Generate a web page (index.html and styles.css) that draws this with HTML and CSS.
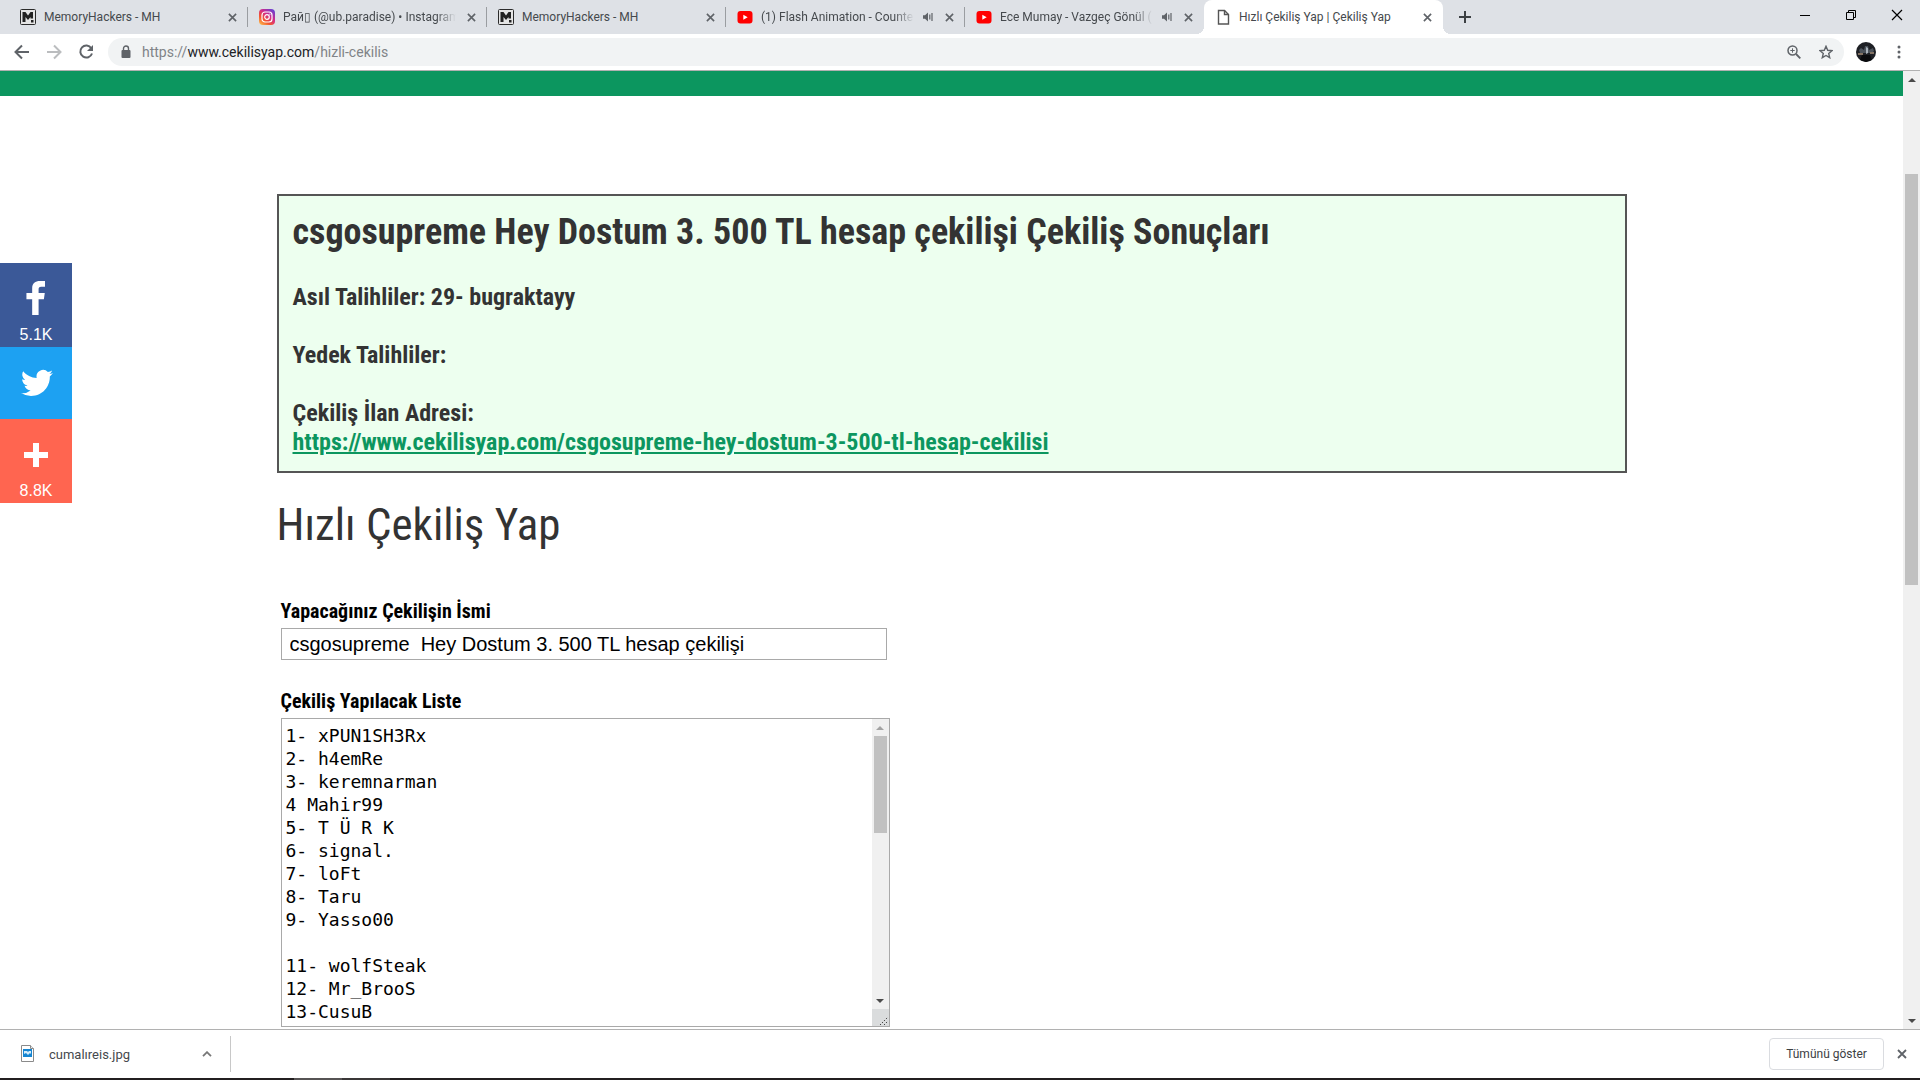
FILE: index.html
```html
<!DOCTYPE html>
<html lang="tr">
<head>
    <meta charset="UTF-8">
    <meta name="viewport" content="width=device-width, initial-scale=1.0">
    <title>Hızlı Çekiliş Yap | Çekiliş Yap</title>
    <link rel="stylesheet" href="styles.css">
</head>
<body>
    <!-- shared icons -->
    <svg class="sprite" aria-hidden="true">
        <symbol id="i-close" viewBox="0 0 10 10"><path d="M1 1l8 8M9 1L1 9" stroke="currentColor" stroke-width="1.8" fill="none"/></symbol>
        <symbol id="i-mh" viewBox="0 0 16 16">
            <rect x="0.5" y="0.5" width="15" height="15" rx="1" fill="#e4e4e4" stroke="#2b2b2b"/>
            <path d="M2.5 13V3h3L8 6.5 10.500 3h2.500v6.500h-2.500V8L8 11 5.500 8v5z" fill="#222"/>
            <rect x="11" y="11" width="2.500" height="2.500" fill="#222"/>
        </symbol>
        <symbol id="i-yt" viewBox="0 0 16 16">
            <rect x="0.5" y="2" width="15" height="12.500" rx="3" fill="#f00"/>
            <path d="M6.300 5.800v5l4.400-2.500z" fill="#fff"/>
        </symbol>
        <symbol id="i-sound" viewBox="0 0 12 12">
            <path d="M1 4.200h2L6 1.500v9L3 7.800H1z" fill="#5f6368"/>
            <path d="M7.800 3.500v5M10 2v8" stroke="#5f6368" stroke-width="1.200"/>
        </symbol>
        <symbol id="i-up" viewBox="0 0 8 4"><path d="M4 0l4 4H0z" fill="currentColor"/></symbol>
        <symbol id="i-down" viewBox="0 0 8 4"><path d="M0 0h8L4 4z" fill="currentColor"/></symbol>
    </svg>

    <header class="browser">
        <div class="tabs">
            <div class="tab">
                <svg class="favicon"><use href="#i-mh"/></svg>
                <span class="tab-title">MemoryHackers - MH</span>
                <button class="tab-close" aria-label="Kapat"><svg><use href="#i-close"/></svg></button>
            </div>
            <div class="tab">
                <svg class="favicon" viewBox="0 0 16 16">
                    <defs>
                        <linearGradient id="ig" x1="0" y1="1" x2="0.8" y2="0">
                            <stop offset="0" stop-color="#fdc94f"/>
                            <stop offset="0.350" stop-color="#f3562f"/>
                            <stop offset="0.650" stop-color="#d22a8a"/>
                            <stop offset="1" stop-color="#6a3fd0"/>
                        </linearGradient>
                    </defs>
                    <rect width="16" height="16" rx="4" fill="url(#ig)"/>
                    <rect x="3" y="3" width="10" height="10" rx="3" fill="none" stroke="#fff" stroke-width="1.200"/>
                    <circle cx="8" cy="8" r="2.300" fill="none" stroke="#fff" stroke-width="1.200"/>
                    <circle cx="10.900" cy="5.100" r="0.700" fill="#fff"/>
                </svg>
                <span class="tab-title fade">Рай▯ (@ub.paradise) • Instagram</span>
                <button class="tab-close" aria-label="Kapat"><svg><use href="#i-close"/></svg></button>
            </div>
            <div class="tab">
                <svg class="favicon"><use href="#i-mh"/></svg>
                <span class="tab-title">MemoryHackers - MH</span>
                <button class="tab-close" aria-label="Kapat"><svg><use href="#i-close"/></svg></button>
            </div>
            <div class="tab">
                <svg class="favicon"><use href="#i-yt"/></svg>
                <span class="tab-title fade">(1) Flash Animation - Counte</span>
                <svg class="tab-sound"><use href="#i-sound"/></svg>
                <button class="tab-close" aria-label="Kapat"><svg><use href="#i-close"/></svg></button>
            </div>
            <div class="tab no-line">
                <svg class="favicon"><use href="#i-yt"/></svg>
                <span class="tab-title fade">Ece Mumay - Vazgeç Gönül (</span>
                <svg class="tab-sound"><use href="#i-sound"/></svg>
                <button class="tab-close" aria-label="Kapat"><svg><use href="#i-close"/></svg></button>
            </div>
            <div class="tab active">
                <svg class="favicon" viewBox="0 0 16 16">
                    <path d="M3.500 1.500h6l4 4v9.500h-10z" fill="#fff" stroke="#555" stroke-width="1.400"/>
                    <path d="M9.500 1.500v4h4" fill="none" stroke="#555" stroke-width="1.400"/>
                </svg>
                <span class="tab-title">Hızlı Çekiliş Yap | Çekiliş Yap</span>
                <button class="tab-close" aria-label="Kapat"><svg><use href="#i-close"/></svg></button>
            </div>
            <button class="new-tab" aria-label="Yeni sekme">
                <svg viewBox="0 0 12 12"><path d="M6 0v12M0 6h12" stroke="#3c4043" stroke-width="2"/></svg>
            </button>
            <div class="window-buttons">
                <button aria-label="Küçült"><svg viewBox="0 0 12 12"><path d="M1 6.500h10" stroke="#000"/></svg></button>
                <button aria-label="Geri yükle"><svg viewBox="0 0 12 12" fill="none" stroke="#000"><path d="M1.500 3.500h7v7h-7zM3.500 3.500v-2h7v7h-2"/></svg></button>
                <button aria-label="Kapat"><svg viewBox="0 0 12 12"><path d="M1 1l10 10M11 1L1 11" stroke="#000" stroke-width="1.200"/></svg></button>
            </div>
        </div>

        <div class="toolbar">
            <button class="nav-btn" aria-label="Geri"><svg viewBox="0 0 16 16"><path d="M15 8H2M8 1.500L1.500 8 8 14.500" fill="none" stroke="#5f6368" stroke-width="2"/></svg></button>
            <button class="nav-btn" aria-label="İleri"><svg viewBox="0 0 16 16"><path d="M1 8h13M8 1.500L14.500 8 8 14.500" fill="none" stroke="#bbbdbf" stroke-width="2"/></svg></button>
            <button class="nav-btn" aria-label="Yenile"><svg viewBox="0 0 16 16"><path d="M13.300 4.200A6 6 0 1 0 14 9.500" fill="none" stroke="#5f6368" stroke-width="2"/><path d="M15 1v6H9z" fill="#5f6368"/></svg></button>
            <div class="omnibox">
                <svg class="lock" viewBox="0 0 10 14"><path d="M2.500 6V3.500a2.500 2.500 0 0 1 5 0V6" fill="none" stroke="#5f6368" stroke-width="1.400"/><rect x="0.5" y="5" width="9" height="8" rx="1" fill="#5f6368"/></svg>
                <span class="url">https://<b>www.cekilisyap.com</b>/hizli-cekilis</span>
                <button class="omni-btn" aria-label="Yakınlaştır"><svg viewBox="0 0 14 14" fill="none" stroke="#5f6368"><circle cx="5.500" cy="5.500" r="4.500" stroke-width="1.500"/><path d="M9 9l4.300 4.300" stroke-width="1.800"/><path d="M5.500 3.300v4.400M3.300 5.500h4.400"/></svg></button>
                <button class="omni-btn" aria-label="Yer işareti"><svg viewBox="0 0 14 14"><path d="M7 1.300l1.700 4 4.300.4-3.300 2.800 1 4.200L7 10.500l-3.700 2.200 1-4.200L1 5.700l4.300-.4z" fill="none" stroke="#5f6368" stroke-width="1.400"/></svg></button>
            </div>
            <svg class="avatar" viewBox="0 0 20 20">
                <circle cx="10" cy="10" r="10" fill="#1d1f24"/>
                <path d="M3 8l2-2 3 2 1-4h3l1 4 4-2 1 3-2 2H4z" fill="#4c535b"/>
                <path d="M10 5l2 1v5l-2 1z" fill="#a9b2bb"/>
                <path d="M2 11h5v2H2zM14 10h4v2h-4z" fill="#837263"/>
                <path d="M6 13h8l2 5-6 2-6-2z" fill="#090a0d"/>
            </svg>
            <button class="menu-btn" aria-label="Menü"><svg viewBox="0 0 4 14" fill="#5f6368"><circle cx="2" cy="2" r="1.500"/><circle cx="2" cy="7" r="1.500"/><circle cx="2" cy="12" r="1.500"/></svg></button>
        </div>
    </header>

    <div class="viewport">
        <main class="page">
            <div class="top-strip"></div>
            <div class="container">
                <section class="result">
                    <h2>csgosupreme Hey Dostum 3. 500 TL hesap çekilişi Çekiliş Sonuçları</h2>
                    <p>Asıl Talihliler: 29- bugraktayy</p>
                    <p>Yedek Talihliler:</p>
                    <p>Çekiliş İlan Adresi:<br>
                    <a href="#">https://www.cekilisyap.com/csgosupreme-hey-dostum-3-500-tl-hesap-cekilisi</a></p>
                </section>

                <h1>Hızlı Çekiliş Yap</h1>

                <form class="draw-form">
                    <label for="draw-name">Yapacağınız Çekilişin İsmi</label>
                    <input type="text" id="draw-name" value="csgosupreme  Hey Dostum 3. 500 TL hesap çekilişi">

                    <label for="draw-list">Çekiliş Yapılacak Liste</label>
                    <div class="list-box">
<textarea id="draw-list" spellcheck="false">
1- xPUN1SH3Rx
2- h4emRe
3- keremnarman
4 Mahir99
5- T Ü R K
6- signal.
7- loFt
8- Taru
9- Yasso00

11- wolfSteak
12- Mr_BrooS
13-CusuB</textarea>
                        <div class="list-side">
                            <div class="scrollbar small">
                                <svg class="arrow off"><use href="#i-up"/></svg>
                                <div class="track"><div class="thumb"></div></div>
                                <svg class="arrow"><use href="#i-down"/></svg>
                            </div>
                            <svg class="grip" viewBox="0 0 17 17"><path d="M8 16l8-8M12 16l4-4" stroke="#444" stroke-dasharray="1.400"/></svg>
                        </div>
                    </div>
                </form>
            </div>
        </main>

        <div class="scrollbar">
            <svg class="arrow"><use href="#i-up"/></svg>
            <div class="track page-track"><div class="thumb"></div></div>
            <svg class="arrow"><use href="#i-down"/></svg>
        </div>

        <aside class="share">
            <a class="share-fb" href="#" aria-label="Facebook">
                <svg viewBox="0 0 32 32"><path d="M22 5.200h-3.400c-1.800 0-2.300.9-2.300 2.300v3.200h5.500l-.8 5.500h-4.700v14h-5.700v-14H5.500v-5.500h5.100V6.500C10.600 2 13.400.0 17.500.0H22z" transform="translate(2 0)" fill="#fff"/></svg>
                <span>5.1K</span>
            </a>
            <a class="share-tw" href="#" aria-label="Twitter">
                <svg viewBox="0 0 32 32"><path d="M32 6.100c-1.200.5-2.400.9-3.800 1 1.400-.8 2.400-2.100 2.900-3.600-1.300.8-2.700 1.300-4.200 1.600A6.560 6.560 0 0 0 15.700 11C10.300 10.800 5.400 8.200 2.200 4.200a6.560 6.560 0 0 0 2 8.800c-1.100 0-2.100-.3-3-.8v.1c0 3.200 2.300 5.800 5.300 6.400-1 .3-2 .3-3 .1.800 2.600 3.300 4.500 6.100 4.600A13.200 13.200 0 0 1 0 26.100 18.600 18.600 0 0 0 10.100 29c12.100 0 18.700-10 18.700-18.700v-.8c1.200-.9 2.400-2.100 3.200-3.400z" fill="#fff"/></svg>
            </a>
            <a class="share-more" href="#" aria-label="Paylaş">
                <svg viewBox="0 0 32 32"><path d="M13 4h6v9h9v6h-9v9h-6v-9H4v-6h9z" fill="#fff"/></svg>
                <span>8.8K</span>
            </a>
        </aside>
    </div>

    <footer class="downloads">
        <button class="download-item">
            <svg viewBox="0 0 14 18"><path d="M0.500 0.500h9l3 3v13h-12z" fill="#fff" stroke="#8a8a8a"/><path d="M9.500 0.500v3h3" fill="#eee" stroke="#8a8a8a"/><rect x="2" y="4" width="9" height="8" fill="#1685d1"/><path d="M3 6h3l1 1 1-1h2v3l-1-1-2 2-2-2-2 1z" fill="#d5ecfa"/></svg>
            <span>cumalıreis.jpg</span>
            <svg class="chevron" viewBox="0 0 10 6"><path d="M1 5.200l4-4 4 4" fill="none" stroke="#777" stroke-width="1.800"/></svg>
        </button>
        <button class="show-all">Tümünü göster</button>
        <button class="bar-close" aria-label="Kapat"><svg><use href="#i-close"/></svg></button>
    </footer>
    <div class="taskbar"></div>
</body>
</html>
```

FILE: styles.css
```css
* {
    box-sizing: border-box;
}
body {
    margin: 0;
    height: 100vh;
    display: flex;
    flex-direction: column;
    overflow: hidden;
    background-color: #fff;
    font-family: Roboto, "Noto Sans", sans-serif;
    font-size: 12px;
}
svg {
    display: block;
    flex: none;
}
button {
    display: flex;
    align-items: center;
    justify-content: center;
    padding: 0;
    border: none;
    background: none;
    font: inherit;
    color: #5f6368;
}
.sprite {
    position: absolute;
    width: 0;
    height: 0;
}

/* tab strip */
.tabs {
    display: flex;
    height: 34px;
    padding-left: 9px;
    background-color: #dee1e6;
}
.tab {
    display: flex;
    align-items: center;
    flex: 0 1 239px;
    min-width: 0;
    padding: 0 9px 0 11px;
    color: #45494d;
    background: linear-gradient(#9a9da1, #9a9da1) right center / 1px 20px no-repeat;
}
.tab.no-line {
    background: none;
}
.tab.active {
    position: relative;
    background: #fff;
    border-radius: 8px 8px 0 0;
}
.tab.active::before,
.tab.active::after {
    content: "";
    position: absolute;
    bottom: 0;
    width: 8px;
    height: 8px;
}
.tab.active::before {
    left: -8px;
    background: radial-gradient(circle at 0 0, transparent 8px, #fff 8px);
}
.tab.active::after {
    right: -8px;
    background: radial-gradient(circle at 100% 0, transparent 8px, #fff 8px);
}
.favicon {
    width: 16px;
    height: 16px;
    margin-right: 8px;
}
.tab-title {
    flex: 1;
    min-width: 0;
    margin-right: 8px;
    overflow: hidden;
    white-space: nowrap;
}
.tab-title.fade {
    -webkit-mask-image: linear-gradient(to left, transparent, #000 20px);
    mask-image: linear-gradient(to left, transparent, #000 20px);
}
.tab-sound {
    width: 12px;
    height: 12px;
    margin-right: 8px;
}
.tab-close {
    width: 14px;
    height: 14px;
}
.tab-close svg {
    width: 9px;
    height: 9px;
}
.new-tab {
    width: 44px;
}
.new-tab svg {
    width: 12px;
    height: 12px;
}
.window-buttons {
    display: flex;
    height: 29px;
    margin-left: auto;
}
.window-buttons button {
    width: 46px;
}
.window-buttons svg {
    width: 12px;
    height: 12px;
}

/* address bar */
.toolbar {
    display: flex;
    align-items: center;
    height: 37px;
    padding: 0 14px 0 6px;
    border-bottom: 1px solid #b1b1b1;
}
.nav-btn {
    width: 32px;
    height: 32px;
}
.nav-btn svg {
    width: 16px;
    height: 16px;
}
.omnibox {
    display: flex;
    align-items: center;
    flex: 1;
    height: 28px;
    margin: 0 12px 0 6px;
    padding: 0 2px 0 13px;
    border-radius: 14px;
    background-color: #f1f3f4;
    font-size: 14px;
    color: #808387;
}
.lock {
    width: 10px;
    height: 14px;
    margin-right: 11px;
}
.url {
    flex: 1;
}
.url b {
    font-weight: normal;
    color: #202124;
}
.omni-btn {
    width: 32px;
    height: 28px;
}
.omni-btn svg {
    width: 14px;
    height: 14px;
}
.avatar {
    width: 20px;
    height: 20px;
}
.menu-btn {
    width: 30px;
    height: 28px;
    margin-left: 8px;
    margin-right: -8px;
}
.menu-btn svg {
    width: 4px;
    height: 14px;
}

/* page */
.viewport {
    position: relative;
    display: flex;
    flex: 1;
    min-height: 0;
}
.page {
    flex: 1;
    overflow: hidden;
    font-family: "Roboto Condensed", "Liberation Sans Narrow", Roboto, sans-serif;
}
.top-strip {
    height: 25px;
    background-color: #0c965f;
}
.container {
    max-width: 1350px;
    margin: 98px auto 0;
}
.result {
    padding: 14px;
    border: 2px solid #555;
    background-color: #edffef;
    color: #333;
    font-size: 24px;
    font-weight: bold;
    line-height: 29px;
}
.result h2 {
    margin: 0 0 29px;
    font-size: 36px;
    line-height: 44px;
}
.result p {
    margin: 0 0 29px;
}
.result p:last-child {
    margin-bottom: 0;
}
.result a {
    color: #0c965f;
}
h1 {
    margin: 24px 0 46px;
    color: #333;
    font-size: 45px;
    font-weight: normal;
    line-height: 56px;
}
.draw-form {
    display: flex;
    flex-direction: column;
    max-width: 613px;
    padding-left: 4px;
}
.draw-form label {
    margin-bottom: 5px;
    color: #000;
    font-size: 20px;
    font-weight: bold;
    line-height: 24px;
}
.draw-form input {
    height: 32px;
    margin: 0 3px 29px 0;
    padding: 0 8px;
    border: 1px solid #a9a9a9;
    font-family: "Liberation Sans", Arial, sans-serif;
    font-size: 20px;
    color: #000;
}
.list-box {
    display: flex;
    height: 309px;
    border: 1px solid #a9a9a9;
}
.list-box textarea {
    flex: 1;
    padding: 5px 4px;
    border: none;
    outline: none;
    resize: none;
    overflow: hidden;
    font-family: "DejaVu Sans Mono", monospace;
    font-size: 18px;
    line-height: 23px;
    color: #000;
}
.list-side {
    display: flex;
    flex-direction: column;
}
.grip {
    width: 17px;
    height: 17px;
    background-color: #dadcdd;
}

/* scrollbars */
.scrollbar {
    display: flex;
    flex-direction: column;
    align-items: center;
    width: 17px;
    background-color: #f0f0f0;
}
.scrollbar.small {
    flex: 1;
}
.arrow {
    width: 8px;
    height: 4px;
    margin: 7px 0 6px;
    color: #4a4a4a;
}
.arrow.off {
    color: #a3a3a3;
}
.track {
    flex: 1;
    width: 13px;
}
.thumb {
    height: 38%;
    background-color: #c1c1c1;
}
.page-track {
    padding-top: 86px;
}
.page-track .thumb {
    height: 49%;
}

/* share buttons on the left edge */
.share {
    position: absolute;
    top: 192px;
    left: 0;
    width: 72px;
    font-family: "Liberation Sans", Arial, sans-serif;
    font-size: 16px;
    line-height: 18px;
}
.share a {
    display: flex;
    flex-direction: column;
    align-items: center;
    justify-content: space-between;
    height: 84px;
    padding: 18px 0 3px;
    color: #fff;
    text-decoration: none;
}
.share svg {
    width: 36px;
    height: 36px;
}
.share .share-fb {
    background-color: #3b5998;
}
.share .share-tw {
    height: 72px;
    padding: 20px 0 18px 2px;
    background-color: #1da1f2;
}
.share .share-tw svg {
    width: 32px;
    height: 32px;
}
.share .share-more {
    background-color: #ff6550;
}
.share .share-more svg {
    width: 32px;
}

/* download shelf */
.downloads {
    display: flex;
    align-items: center;
    height: 49px;
    padding-right: 12px;
    border-top: 1px solid #b1b1b1;
}
.download-item {
    gap: 14px;
    width: 231px;
    height: 36px;
    padding: 0 18px 0 21px;
    border-right: 1px solid #c8c8c8;
    color: #45494d;
    font-size: 13px;
}
.download-item svg {
    width: 14px;
    height: 18px;
}
.download-item .chevron {
    width: 10px;
    height: 6px;
    margin-left: auto;
}
.show-all {
    width: 115px;
    height: 32px;
    margin-left: auto;
    border: 1px solid #dadce0;
    border-radius: 4px;
    color: #3c4043;
}
.bar-close {
    width: 12px;
    height: 12px;
    margin-left: 12px;
}
.bar-close svg {
    width: 10px;
    height: 10px;
}
.taskbar {
    height: 2px;
    background: linear-gradient(to right, #231f20 294px, #565354 294px, #565354 342px, #3a3737 342px, #3a3737 390px, #231f20 390px);
}
```
